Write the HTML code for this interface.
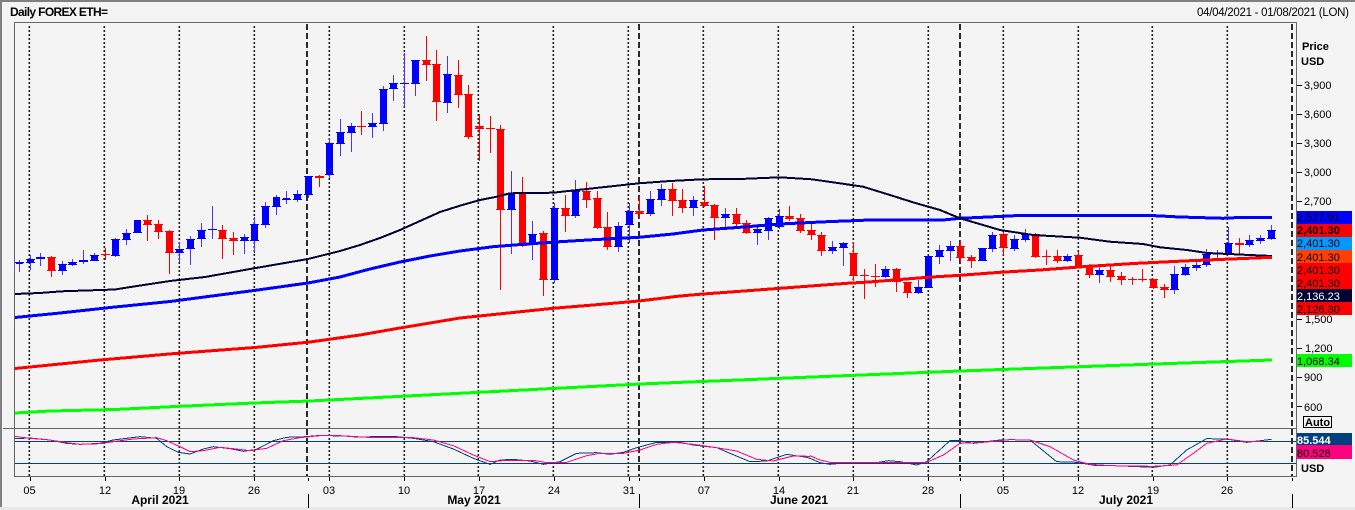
<!DOCTYPE html>
<html><head><meta charset="utf-8"><style>
html,body{margin:0;padding:0;background:#f4f4f4}
svg{display:block}
text{font-family:"Liberation Sans",sans-serif;font-size:11px;fill:#000}
.b{font-weight:bold}
.m{font-weight:bold;font-size:12px}
</style></head><body>
<svg width="1355" height="510" viewBox="0 0 1355 510" xmlns="http://www.w3.org/2000/svg">
<rect width="1355" height="510" fill="#f4f4f4"/>
<rect x="0" y="507" width="1355" height="3" fill="#e8e8e8"/>
<path d="M0 1H1355" stroke="#808080" stroke-width="2" fill="none"/>
<path d="M1 0V507" stroke="#808080" stroke-width="2" fill="none"/>
<text x="10" y="16" class="m" textLength="98">Daily FOREX ETH=</text>
<text x="1197" y="16" style="font-size:11.5px" textLength="152">04/04/2021 - 01/08/2021 (LON)</text>

<path fill="none" d="M29.3 26V476M104.3 26V476M179.3 26V476M254.3 26V476M329.3 26V476M404.3 26V476M478.3 26V476M553.3 26V476M628.3 26V476M703.3 26V476M778.3 26V476M853.3 26V476M928.3 26V476M1003.3 26V476M1078.3 26V476M1152.3 26V476M1227.3 26V476" stroke="#222" stroke-width="1.6" stroke-dasharray="2 2"/>

<g shape-rendering="crispEdges" fill="none">
<path d="M307 24V476M639 24V476M960 24V476M1292 24V476" stroke="#2a2a2a" stroke-width="2" stroke-dasharray="6 3"/>

<!-- blue candles -->
<path stroke="#5530f5" stroke-width="1" d="M19.5 260V272M30.5 255V270M40.5 253V266M62.5 261V275M72.5 259V266M83.5 250V264M94.5 253V261M115.5 238V257M126.5 229V245M137.5 220V233M179.5 242V262M190.5 236V265M201.5 223V247M212.5 206V239M244.5 234V254M254.5 217V253M265.5 202V228M276.5 195V215M286.5 191V204M297.5 190V202M308.5 176V198M329.5 138V178M340.5 119V156M351.5 123V152M372.5 113V138M383.5 86V131M393.5 75V101M404.5 53V107M415.5 60V96M447.5 56V113M511.5 171V254M532.5 221V260M554.5 203V283M575.5 180V218M618.5 222V252M629.5 203V243M650.5 191V216M661.5 184V206M693.5 196V216M725.5 208V228M757.5 224V245M768.5 217V240M779.5 209V229M832.5 241V254M843.5 242V266M885.5 266V278M918.5 280V294M928.5 256V288M939.5 245V264M950.5 241V261M982.5 248V261M992.5 232V252M1014.5 235V251M1025.5 229V242M1067.5 254V262M1099.5 267V283M1174.5 266V294M1185.5 264V276M1196.5 262V271M1206.5 249V267M1217.5 250V258M1228.5 227V255M1249.5 235V247M1260.5 235V244M1271.5 225V240"/>
<path stroke="#0000ff" stroke-width="7" d="M19.5 262V264M30.5 259V263M40.5 257V259M62.5 264V271M72.5 262V265M83.5 260V262M94.5 255V261M115.5 239V256M126.5 233V240M137.5 220V233M179.5 249V253M190.5 239V249M201.5 230V239M212.5 229V230M244.5 237V241M254.5 224V241M265.5 206V225M276.5 197V207M286.5 198V200M297.5 194V200M308.5 176V195M329.5 143V175M340.5 132V144M351.5 126V133M372.5 123V127M383.5 89V124M393.5 83V89M404.5 83V84M415.5 60V84M447.5 74V103M511.5 193V210M532.5 234V244M554.5 208V280M575.5 191V216M618.5 226V247M629.5 211V225M650.5 199V214M661.5 189V200M693.5 200V208M725.5 214V218M757.5 229V233M768.5 218V231M779.5 216V227M832.5 247V251M843.5 243V248M885.5 269V277M918.5 287V293M928.5 256V288M939.5 250V257M950.5 246V251M982.5 248V261M992.5 235V249M1014.5 239V249M1025.5 234V240M1067.5 256V261M1099.5 270V275M1174.5 274V290M1185.5 267V275M1196.5 265V268M1206.5 254V265M1217.5 253V254M1228.5 243V254M1249.5 240V245M1260.5 238V241M1271.5 230V239"/>
<path stroke="#0000ff" stroke-width="9" d="M19.5 262v1M30.5 259v1M30.5 262v1M40.5 257v1M40.5 258v1M62.5 264v1M62.5 270v1M72.5 262v1M72.5 264v1M83.5 260v1M83.5 261v1M94.5 255v1M94.5 260v1M115.5 239v1M115.5 255v1M126.5 233v1M126.5 239v1M137.5 232v1M179.5 249v1M179.5 252v1M190.5 239v1M190.5 248v1M201.5 230v1M201.5 238v1M212.5 229v1M244.5 237v1M244.5 240v1M254.5 224v1M254.5 240v1M265.5 206v1M265.5 224v1M276.5 206v1M286.5 199v1M297.5 194v1M297.5 199v1M308.5 176v1M308.5 194v1M329.5 143v1M329.5 174v1M340.5 132v1M340.5 143v1M351.5 126v1M351.5 132v1M372.5 123v1M372.5 126v1M383.5 89v1M383.5 123v1M393.5 83v1M393.5 88v1M404.5 83v1M415.5 60v1M415.5 83v1M447.5 74v1M447.5 102v1M511.5 193v1M511.5 209v1M532.5 234v1M532.5 243v1M554.5 208v1M554.5 279v1M575.5 191v1M575.5 215v1M618.5 226v1M618.5 246v1M629.5 211v1M629.5 224v1M650.5 199v1M650.5 213v1M661.5 189v1M661.5 199v1M693.5 200v1M693.5 207v1M725.5 214v1M725.5 217v1M757.5 229v1M757.5 232v1M768.5 218v1M768.5 230v1M779.5 216v1M779.5 226v1M832.5 247v1M832.5 250v1M843.5 243v1M843.5 247v1M885.5 269v1M885.5 276v1M918.5 287v1M918.5 292v1M928.5 256v1M928.5 287v1M939.5 250v1M939.5 256v1M950.5 246v1M950.5 250v1M982.5 248v1M982.5 260v1M992.5 235v1M992.5 248v1M1014.5 239v1M1014.5 248v1M1025.5 234v1M1025.5 239v1M1067.5 256v1M1067.5 260v1M1099.5 270v1M1099.5 274v1M1174.5 274v1M1174.5 289v1M1185.5 267v1M1185.5 274v1M1196.5 265v1M1196.5 267v1M1206.5 254v1M1206.5 264v1M1217.5 253v1M1228.5 243v1M1228.5 253v1M1249.5 240v1M1249.5 244v1M1260.5 238v1M1260.5 240v1M1271.5 230v1M1271.5 238v1"/>

<!-- red candles -->
<path stroke="#ff0000" stroke-width="1" d="M51.5 256V277M105.5 248V260M147.5 215V241M158.5 220V239M169.5 230V274M222.5 225V259M233.5 232V255M319.5 175V187M361.5 111V135M426.5 36V81M436.5 50V121M458.5 60V108M468.5 85V139M479.5 114V161M490.5 116V153M500.5 125V290M522.5 177V247M543.5 231V296M565.5 195V232M586.5 182V208M597.5 191V229M607.5 212V250M639.5 196V219M672.5 183V216M682.5 189V213M704.5 186V207M714.5 204V240M736.5 208V228M746.5 220V234M789.5 206V221M800.5 214V233M811.5 224V240M821.5 232V256M853.5 242V281M864.5 269V299M875.5 264V287M896.5 268V292M907.5 282V298M960.5 240V263M971.5 255V268M1003.5 231V255M1035.5 233V258M1046.5 250V265M1057.5 250V263M1078.5 252V268M1089.5 264V278M1110.5 266V282M1121.5 272V285M1132.5 277V285M1142.5 269V282M1153.5 279V289M1164.5 284V298M1239.5 238V255"/>
<path stroke="#ff0000" stroke-width="7" d="M51.5 257V271M105.5 254V255M147.5 220V225M158.5 224V232M169.5 231V253M222.5 230V239M233.5 238V241M319.5 176V178M361.5 126V127M426.5 60V65M436.5 64V102M458.5 75V95M468.5 94V137M479.5 126V129M490.5 128V129M500.5 129V210M522.5 193V246M543.5 233V280M565.5 208V216M586.5 191V200M597.5 198V228M607.5 227V247M639.5 211V214M672.5 189V201M682.5 200V208M704.5 202V206M714.5 205V218M736.5 214V224M746.5 223V233M789.5 216V219M800.5 218V231M811.5 230V235M821.5 235V251M853.5 253V276M864.5 275V276M875.5 276V277M896.5 269V282M907.5 282V293M960.5 246V258M971.5 257V261M1003.5 234V248M1035.5 234V257M1046.5 256V257M1057.5 256V261M1078.5 255V267M1089.5 266V275M1110.5 270V277M1121.5 276V280M1132.5 279V280M1142.5 279V280M1153.5 279V288M1164.5 287V290M1239.5 243V245"/>
<path stroke="#ff0000" stroke-width="9" d="M51.5 257v1M51.5 270v1M105.5 254v1M147.5 220v1M147.5 224v1M158.5 224v1M158.5 231v1M169.5 231v1M169.5 252v1M222.5 230v1M222.5 238v1M233.5 238v1M233.5 240v1M319.5 176v1M319.5 177v1M361.5 126v1M426.5 60v1M426.5 64v1M436.5 64v1M436.5 101v1M458.5 75v1M458.5 94v1M468.5 94v1M468.5 136v1M479.5 126v1M479.5 128v1M490.5 128v1M500.5 129v1M500.5 209v1M522.5 193v1M522.5 245v1M543.5 233v1M543.5 279v1M565.5 208v1M565.5 215v1M586.5 191v1M586.5 199v1M597.5 198v1M597.5 227v1M607.5 227v1M607.5 246v1M639.5 211v1M639.5 213v1M672.5 189v1M672.5 200v1M682.5 200v1M682.5 207v1M704.5 202v1M704.5 205v1M714.5 205v1M714.5 217v1M736.5 214v1M736.5 223v1M746.5 223v1M746.5 232v1M789.5 216v1M789.5 218v1M800.5 218v1M800.5 230v1M811.5 230v1M811.5 234v1M821.5 235v1M821.5 250v1M853.5 253v1M853.5 275v1M864.5 275v1M875.5 276v1M896.5 269v1M896.5 281v1M907.5 282v1M907.5 292v1M960.5 246v1M960.5 257v1M971.5 257v1M971.5 260v1M1003.5 234v1M1003.5 247v1M1035.5 234v1M1035.5 256v1M1046.5 256v1M1057.5 256v1M1057.5 260v1M1078.5 255v1M1078.5 266v1M1089.5 266v1M1089.5 274v1M1110.5 270v1M1110.5 276v1M1121.5 276v1M1121.5 279v1M1132.5 279v1M1142.5 279v1M1153.5 279v1M1153.5 287v1M1164.5 287v1M1164.5 289v1M1239.5 243v1M1239.5 244v1"/>

<!-- moving averages -->
<polyline stroke="#00ff00" stroke-width="3" points="15,413 50,411 115,409.5 175,406.5 254,403 310,401 640,384 960,371 1155,364 1272,360"/>
<polyline stroke="#0000ff" stroke-width="3" points="15,317.5 60,313 115,307 170,301.5 254,290.5 308,283 340,277 370,269 400,262 430,256 460,251 493,246.7 527,244 560,241.7 593,239.7 639,237.3 673,234 703,230 740,227.3 780,224 827,221.7 870,220 943,220 960,218.3 1010,216 1020,215.3 1147,215.3 1180,217 1223,218.3 1243,217.3 1272,217.3"/>
<polyline stroke="#000033" stroke-width="2" points="15,294 40,293 62,291.3 115,289.5 137,286 170,281 205,277 254,268.3 308,259 340,251 360,245 380,238 400,230 420,221 440,212 460,205.7 480,200 496.7,196.7 510,193.3 553,192.7 593,188.3 639,183.3 670,181 703,179.3 740,179 780,177.3 811.7,179.3 833,182.3 863,186.7 890,195 913,202.3 940,210 960,218.3 983,225 1000,230 1033,235 1080,237.7 1110,241.7 1143,244 1160,247.3 1187,250 1207,253 1250,255 1272,256"/>
<polyline stroke="#ff0000" stroke-width="3" points="15,368.5 100,360 175,353.5 255,347.5 310,342 360,335 400,328 430,323 460,318 537,310 553,308.3 593,305 639,301 680,296 703,294 740,291.3 780,288.3 847,283.3 873,281.7 927,277.3 960,275.3 1000,272.3 1040,270 1083,266.7 1137,263.3 1190,260.7 1272,257.3"/>

<!-- stochastic -->
<path d="M15 441.5H1296M15 463.5H1296" stroke="#004080" stroke-width="1"/>
<g transform="translate(0,400) scale(.33333)" stroke-width="3">
<polyline stroke="#004080" points="44,116 90,114 150,120 200,130 240,133 300,130 340,120 420,110 470,115 500,140 535,157 570,162 610,147 640,140 690,146 730,154 770,148 820,122 860,112 920,110 960,106 1020,108"/>
<polyline stroke="#ff0080" points="44,109 90,115 150,120 200,128 240,133 300,131 340,125 400,117 470,113 500,122 540,140 570,155 610,152 660,142 700,146 750,152 800,145 850,122 900,113 960,107 1020,106"/>
</g>
<g transform="translate(340,425) scale(.33333)" stroke-width="3">
<polyline stroke="#004080" points="0,32 50,36 160,34 220,40 280,50 340,72 400,100 450,118 480,105 520,103 570,108 610,118 660,110 710,85 770,83 810,88 850,82 890,68 950,52 1020,52 1060,60 1130,68 1170,85 1230,110 1280,108 1340,88 1400,97 1410,100"/>
<polyline stroke="#ff0080" points="0,32 100,38 220,38 280,45 340,62 400,90 450,110 500,106 580,106 620,113 680,112 740,92 780,85 850,85 900,75 950,58 1000,52 1060,58 1130,68 1190,78 1250,103 1300,108 1360,93 1410,94"/>
</g>
<g transform="translate(810,425) scale(.33333)" stroke-width="3">
<polyline stroke="#004080" points="0,100 30,113 60,118 110,113 200,113 235,107 270,110 320,120 350,110 420,47 450,47 490,55 560,46 600,44 660,45 740,110 800,112 860,122 910,122 960,124 1030,127 1080,120 1130,75 1190,41 1250,42 1310,52 1385,43"/>
<polyline stroke="#ff0080" points="0,92 30,105 60,112 180,113 250,113 300,113 350,112 400,90 450,55 520,52 600,44 660,45 720,65 790,105 840,118 900,122 1030,124 1100,120 1150,85 1190,55 1250,42 1310,50 1360,50"/>
</g>

<!-- frame -->
<rect x="14.5" y="22.5" width="1282" height="454" stroke="#666" stroke-width="1"/>
<path d="M3 428.5H1296" stroke="#666" stroke-width="1"/>

<!-- axis ticks -->
<path d="M1297 85.5h5M1297 114.5h5M1297 143.5h5M1297 172.5h5M1297 201.5h5M1297 319.5h5M1297 348.5h5M1297 377.5h5M1297 406.5h5" stroke="#000" stroke-width="1"/>
<path d="M30.5 477V481M105.5 477V481M179.5 477V481M254.5 477V481M329.5 477V481M404.5 477V481M479.5 477V481M554.5 477V481M629.5 477V481M704.5 477V481M779.5 477V481M853.5 477V481M928.5 477V481M1003.5 477V481M1078.5 477V481M1153.5 477V481M1227.5 477V481M308.5 478V481M639.5 478V481M960.5 478V481M1292.5 478V481" stroke="#000" stroke-width="1"/>
<path d="M308.5 494V508M639.5 494V508M960.5 494V508M1292.5 494V508" stroke="#000" stroke-width="1"/>

<!-- tags -->
<rect x="1297" y="211" width="55" height="13" fill="#0000ff"/>
<rect x="1297" y="224" width="55" height="13" fill="#ff0000"/>
<rect x="1297" y="237" width="55" height="13" fill="#0099ff"/>
<rect x="1297" y="250" width="55" height="13" fill="#ff4000"/>
<rect x="1297" y="263" width="55" height="26" fill="#ff0000"/>
<rect x="1297" y="289" width="55" height="13" fill="#000033"/>
<rect x="1297" y="302" width="55" height="13" fill="#ff0000"/>
<rect x="1297" y="354" width="55" height="13" fill="#00ff00"/>
<rect x="1297" y="433" width="55" height="12" fill="#004080"/>
<rect x="1297" y="445" width="55" height="14" fill="#ff0080"/>
<rect x="1303.5" y="416.5" width="28" height="11" stroke="#000" stroke-width="1"/>
</g>

<text x="1302" y="50" class="b">Price</text>
<text x="1301" y="65" class="b">USD</text>
<text x="1304" y="89">3,900</text>
<text x="1304" y="118">3,600</text>
<text x="1304" y="147">3,300</text>
<text x="1304" y="176">3,000</text>
<text x="1304" y="205">2,700</text>
<text x="1305" y="323">1,500</text>
<text x="1305" y="352">1,200</text>
<text x="1304" y="381">900</text>
<text x="1304" y="411">600</text>
<text x="1305" y="426" class="b">Auto</text>

<text x="1297" y="221">2,527.91</text>
<text x="1297" y="234" class="b">2,401.30</text>
<text x="1297" y="247">2,401.30</text>
<text x="1297" y="261">2,401.30</text>
<text x="1297" y="274">2,401.30</text>
<text x="1297" y="287">2,401.30</text>
<text x="1297" y="300" style="fill:#fff">2,136.23</text>
<text x="1297" y="313">2,126.30</text>
<text x="1297" y="365">1,068.34</text>
<text x="1297" y="444" class="b" style="fill:#fff">85.544</text>
<text x="1297" y="457">80.528</text>
<text x="1301" y="472" class="b">USD</text>

<g text-anchor="middle">
<text x="29.5" y="494">05</text><text x="105" y="494">12</text><text x="179" y="494">19</text><text x="254" y="494">26</text><text x="329" y="494">03</text><text x="404" y="494">10</text><text x="479" y="494">17</text><text x="554" y="494">24</text><text x="629" y="494">31</text><text x="704" y="494">07</text><text x="779" y="494">14</text><text x="853" y="494">21</text><text x="928" y="494">28</text><text x="1003" y="494">05</text><text x="1078" y="494">12</text><text x="1153" y="494">19</text><text x="1227" y="494">26</text>
<text x="160" y="504" class="m">April 2021</text>
<text x="474" y="504" class="m">May 2021</text>
<text x="799" y="504" class="m">June 2021</text>
<text x="1126" y="504" class="m">July 2021</text>
</g>
</svg>
</body></html>
